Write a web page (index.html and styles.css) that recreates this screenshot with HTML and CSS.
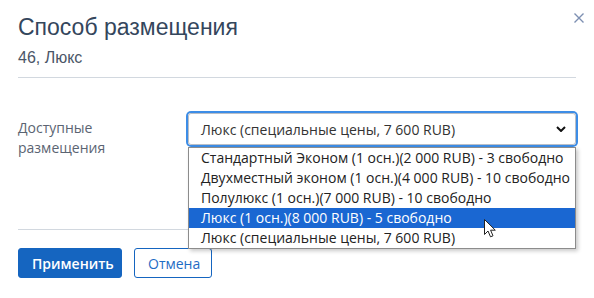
FILE: index.html
```html
<!DOCTYPE html>
<html lang="ru">
<head>
<meta charset="utf-8">
<title>Способ размещения</title>
<link rel="stylesheet" href="styles.css">
</head>
<body>
<div class="modal">
  <button class="close" aria-label="Закрыть">
    <svg width="10" height="10" viewBox="0 0 10 10"><path d="M0.5 0.5 L9.5 9.5 M9.5 0.5 L0.5 9.5" stroke="#7d90b2" stroke-width="1.4" fill="none"/></svg>
  </button>
  <header class="head">
    <h1 class="title">Способ размещения</h1>
    <div class="sub">46, Люкс</div>
  </header>
  <div class="body">
    <div class="row">
      <label class="lbl">Доступные<br>размещения</label>
      <div class="field">
        <div class="select">
          <span class="select-text">Люкс (специальные цены, 7 600 RUB)</span>
          <svg class="chev" width="10" height="6" viewBox="0 0 10 6"><path d="M1 1 L5 5 L9 1" stroke="#111" stroke-width="2" fill="none"/></svg>
        </div>
        <ul class="listbox">
          <li class="opt">Стандартный Эконом (1 осн.)(2 000 RUB) - 3 свободно</li>
          <li class="opt">Двухместный эконом (1 осн.)(4 000 RUB) - 10 свободно</li>
          <li class="opt">Полулюкс (1 осн.)(7 000 RUB) - 10 свободно</li>
          <li class="opt opt-active">Люкс (1 осн.)(8 000 RUB) - 5 свободно</li>
          <li class="opt">Люкс (специальные цены, 7 600 RUB)</li>
        </ul>
        <svg class="cursor" width="13" height="19" viewBox="0 0 13 19"><path d="M0.5 0.5 L0.5 15.5 L4 12 L6.5 17.8 L9 16.8 L6.6 11.2 L11.3 11.2 Z" fill="#fff" stroke="#222" stroke-width="1" stroke-linejoin="round"/></svg>
      </div>
    </div>
  </div>
  <footer class="foot">
    <button class="btn btn-primary">Применить</button>
    <button class="btn btn-outline">Отмена</button>
  </footer>
</div>
</body>
</html>
```
FILE: styles.css
```css
html, body {
  margin: 0;
  padding: 0;
  background: #fff;
}
.modal {
  position: relative;
  padding: 0 18px;
  font-family: "Open Sans", "Liberation Sans", sans-serif;
}
.close {
  position: absolute;
  top: 13px;
  left: 574px;
  width: 10px;
  height: 10px;
  padding: 0;
  border: 0;
  background: none;
  display: block;
}
.close svg { display: block; }
.head {
  padding-top: 13px;
  padding-bottom: 9px;
  border-bottom: 1px solid #d2d8df;
}
.title {
  margin: 0;
  font-family: "Liberation Sans", Arial, sans-serif;
  font-weight: normal;
  font-size: 23px;
  line-height: 28px;
  color: #34465c;
}
.sub {
  margin-top: 7px;
  font-family: "Liberation Sans", Arial, sans-serif;
  font-size: 16px;
  line-height: 20px;
  color: #4b5667;
}
.body {
  padding: 35px 0 71px;
}
.row {
  display: flex;
  align-items: flex-start;
}
.lbl {
  width: 170px;
  flex: none;
  margin-top: 5px;
  font-size: 14px;
  line-height: 20px;
  color: #5b6472;
}
.field {
  position: relative;
  flex: 1;
}
.select {
  box-sizing: border-box;
  height: 32px;
  border: 1px solid #b9bec6;
  border-radius: 3px;
  box-shadow: 0 0 0 2px #3d8de6;
  display: flex;
  align-items: center;
  justify-content: space-between;
  padding: 0 9px 0 12px;
  font-size: 14px;
  color: #333;
}
.chev { display: block; }
.listbox {
  position: absolute;
  top: 34px;
  left: 0;
  right: 0;
  margin: 0;
  padding: 0;
  list-style: none;
  background: #fff;
  border: 1px solid #8c8c8c;
  box-shadow: 2px 2px 4px rgba(0,0,0,0.22);
  z-index: 2;
}
.opt {
  height: 20px;
  line-height: 20px;
  padding-left: 12px;
  font-size: 14px;
  color: #222;
  white-space: nowrap;
}
.opt-active {
  background: #1a67d2;
  color: #fff;
}
.cursor {
  position: absolute;
  left: 296px;
  top: 106px;
  z-index: 3;
}
.foot {
  border-top: 1px solid #d2d8df;
  padding-top: 18px;
  display: flex;
  gap: 12px;
}
.btn {
  box-sizing: border-box;
  height: 30px;
  border-radius: 3px;
  font-family: "Open Sans", "Liberation Sans", sans-serif;
  font-size: 14px;
  padding: 0 13px;
  border: 1px solid #1565c0;
  cursor: pointer;
}
.btn-primary {
  background: #1565c0;
  color: #fff;
  font-weight: 600;
  width: 104px;
}
.btn-outline {
  background: #fff;
  color: #1f6cc4;
  width: 78px;
}
```
